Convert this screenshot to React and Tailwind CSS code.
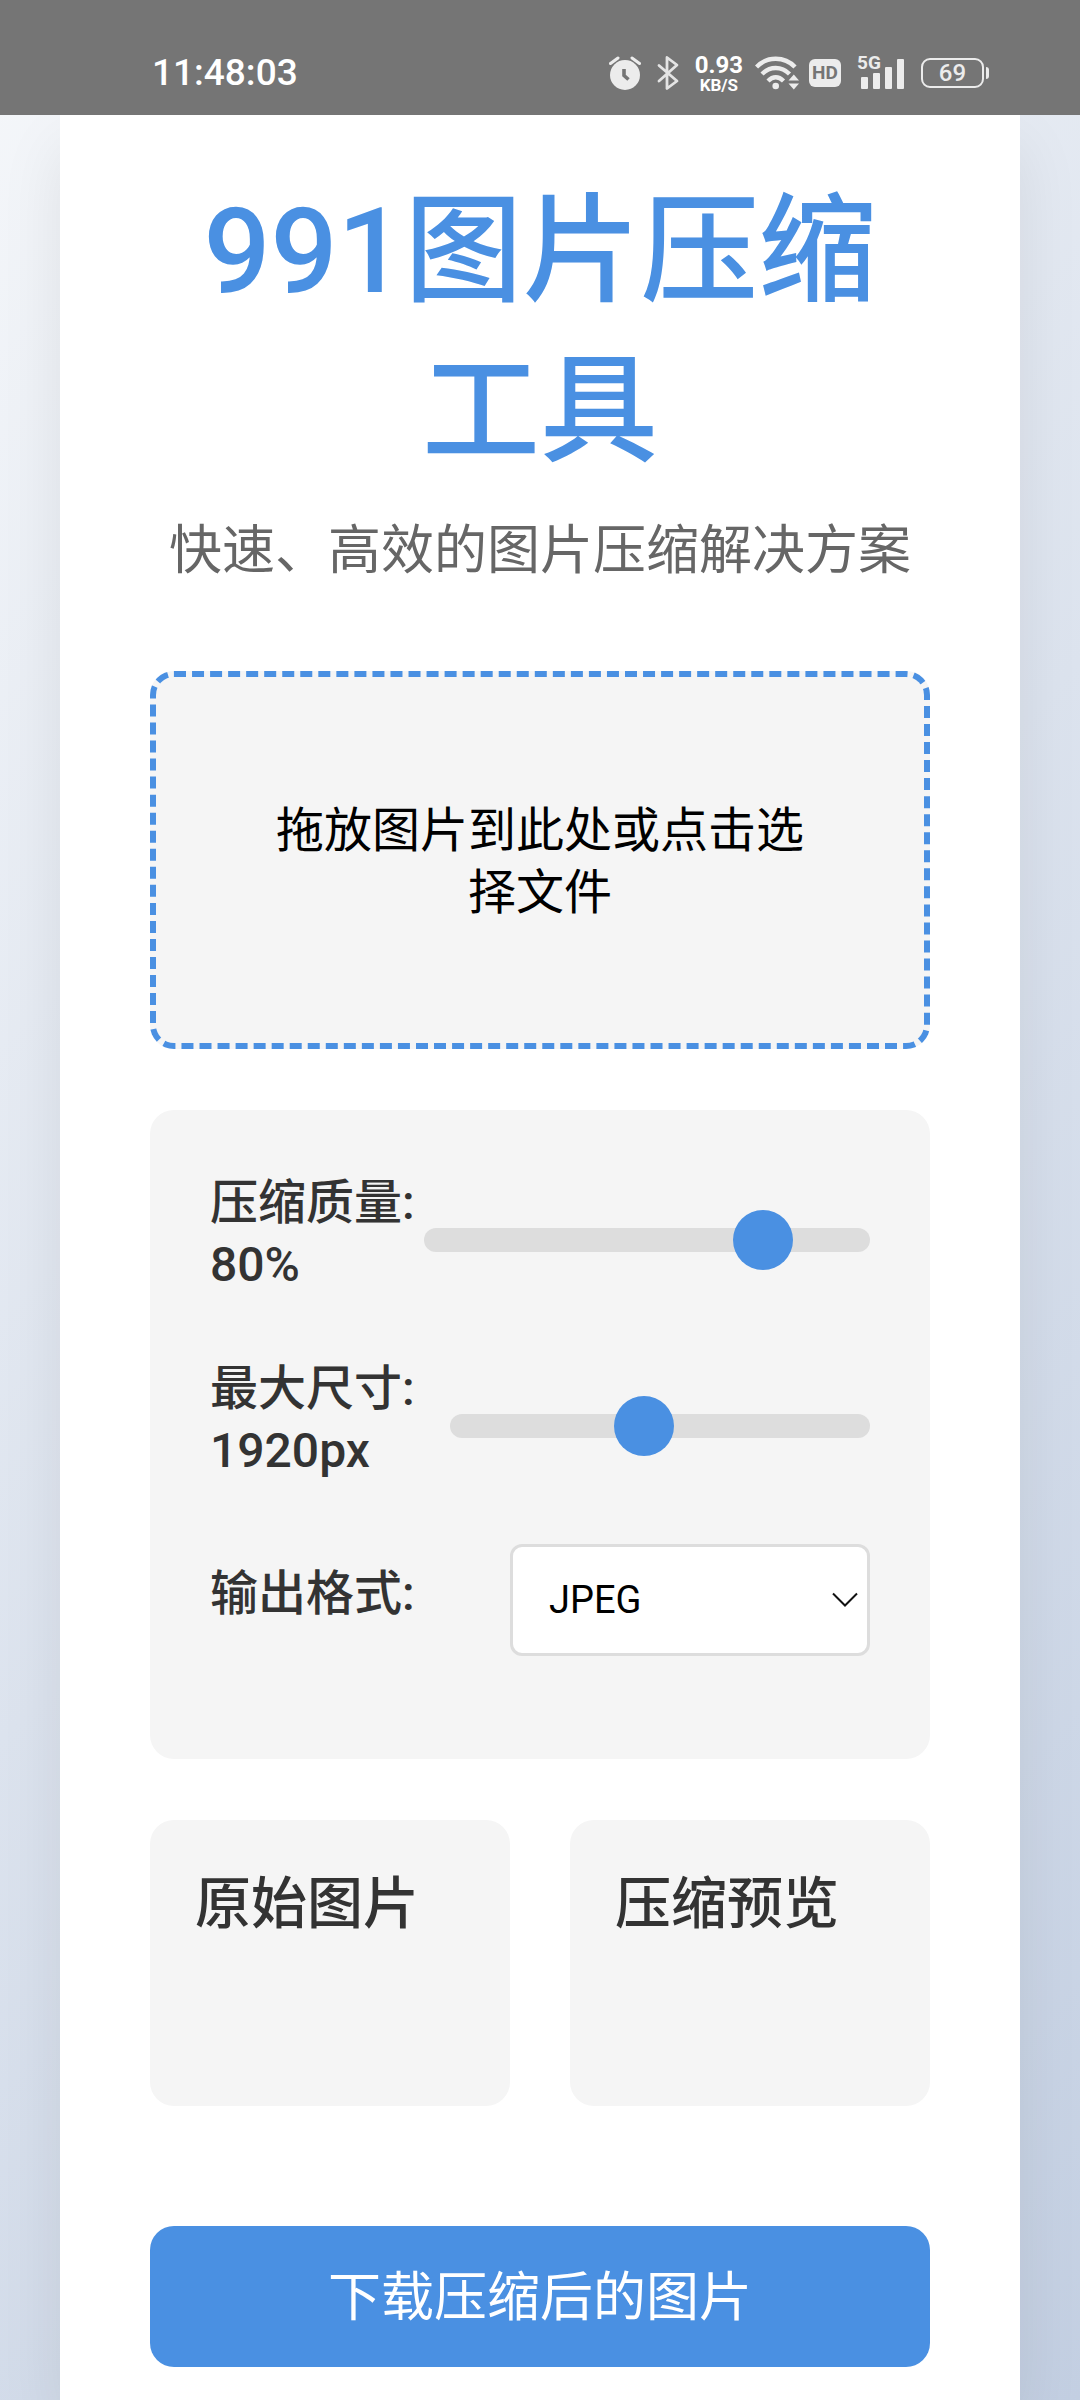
import { useState } from 'react';

const AlarmIcon = () => (
  <svg width="32" height="36" viewBox="0 0 32 36" fill="none" aria-hidden="true">
    <circle cx="16" cy="20" r="15" fill="#ececec" />
    <path d="M1.500 8.500 9 3M30.500 8.500 23 3" stroke="#ececec" strokeWidth="3" strokeLinecap="round" />
    <path d="M15 14v6.500l4.500 4" stroke="#757575" strokeWidth="3.600" />
  </svg>
);

const BluetoothIcon = () => (
  <svg width="22" height="36" viewBox="0 0 22 36" fill="none" aria-hidden="true">
    <path
      d="M2 10.500 20 26l-10 7.500v-31L20 10 2 26"
      stroke="#e4e4e4"
      strokeWidth="2.800"
      strokeLinejoin="round"
      strokeLinecap="round"
    />
  </svg>
);

const WifiIcon = () => (
  <svg width="46" height="36" viewBox="0 0 46 36" fill="none" aria-hidden="true">
    <g stroke="#ececec" strokeWidth="4.400">
      <path d="M1.500 12C12 1 29.500 1 40 12" />
      <path d="M7 19c8-8 19.500-8 27.500 0" />
      <path d="M13 26c5-5 10.500-5 15.500 0" />
    </g>
    <circle cx="20.700" cy="31" r="3.300" fill="#ececec" />
    <path d="M33.500 25.500h10.500l-5.200-6zM33.500 28.500h10.500l-5.200 6z" fill="#ececec" />
  </svg>
);

const SignalIcon = () => (
  <svg width="48" height="36" viewBox="0 0 48 36" fill="#ececec" aria-hidden="true">
    <rect x="4" y="22" width="7" height="12" rx="1" />
    <rect x="16" y="18" width="7" height="16" rx="1" />
    <rect x="28" y="12" width="7" height="22" rx="1" />
    <rect x="40" y="4" width="7" height="30" rx="1" />
  </svg>
);

const StatusBar = () => (
  <div className="relative z-10 flex h-[115px] shrink-0 items-center justify-between bg-[#757575] pt-[30px] pr-[91px] pl-[152px] text-[#ececec]">
    <time className="text-[37px] leading-none font-medium text-white">11:48:03</time>
    <div className="flex items-center">
      <AlarmIcon />
      <span className="ml-4">
        <BluetoothIcon />
      </span>
      <div className="ml-4 flex flex-col items-center font-bold text-white">
        <span className="text-[24px] leading-6">0.93</span>
        <span className="text-[17px] leading-4">KB/S</span>
      </div>
      <span className="ml-3">
        <WifiIcon />
      </span>
      <span className="ml-2 flex h-7 w-8 items-center justify-center rounded-md bg-[#ececec] text-[19px] leading-none font-bold text-[#757575]">
        HD
      </span>
      <div className="relative ml-4">
        <SignalIcon />
        <span className="absolute top-0 left-0 bg-[#757575] text-[19px] leading-4 font-bold">5G</span>
      </div>
      <div className="ml-4 flex items-center gap-0.5">
        <span className="flex h-[30px] w-[63px] items-center justify-center rounded-[9px] border-2 border-[#ececec] text-[24px] leading-none font-medium">
          69
        </span>
        <span className="h-3 w-[3px] rounded-r bg-[#ececec]" />
      </div>
    </div>
  </div>
);

const sliderClass =
  'h-6 min-w-0 flex-1 appearance-none rounded-full bg-[#ddd] outline-none [&::-webkit-slider-thumb]:size-[60px] [&::-webkit-slider-thumb]:appearance-none [&::-webkit-slider-thumb]:rounded-full [&::-webkit-slider-thumb]:bg-[#4a90e2]';

const labelClass = 'shrink-0 pb-3 text-[48px] leading-[62px] font-medium text-[#333]';

const Settings = () => {
  const [quality, setQuality] = useState(80);
  const [maxSize, setMaxSize] = useState(1920);
  const [format, setFormat] = useState('jpeg');

  return (
    <section className="mt-[61px] flex flex-col gap-[50px] rounded-3xl bg-[#f5f5f5] px-[60px] pt-[62px] pb-[103px]">
      <div className="flex items-center">
        <label htmlFor="quality" className={`${labelClass} w-[214px]`}>
          压缩质量: <span className="block">{quality}%</span>
        </label>
        <input
          id="quality"
          type="range"
          min="0"
          max="100"
          value={quality}
          onChange={(e) => setQuality(Number(e.target.value))}
          className={sliderClass}
        />
      </div>

      <div className="flex items-center">
        <label htmlFor="max-size" className={`${labelClass} w-[240px]`}>
          最大尺寸: <span className="block">{maxSize}px</span>
        </label>
        <input
          id="max-size"
          type="range"
          min="100"
          max="4096"
          value={maxSize}
          onChange={(e) => setMaxSize(Number(e.target.value))}
          className={sliderClass}
        />
      </div>

      <div className="flex items-center">
        <label htmlFor="format" className={`${labelClass} w-[300px]`}>
          输出格式:
        </label>
        <div className="relative min-w-0 flex-1">
          <select
            id="format"
            value={format}
            onChange={(e) => setFormat(e.target.value)}
            className="block h-28 w-full appearance-none rounded-xl border-3 border-[#ddd] bg-white px-9 text-[38px] text-black"
          >
            <option value="jpeg">JPEG</option>
            <option value="png">PNG</option>
            <option value="webp">WebP</option>
          </select>
          <svg
            className="pointer-events-none absolute top-12 right-3"
            width="26"
            height="16"
            viewBox="0 0 26 16"
            fill="none"
            aria-hidden="true"
          >
            <path d="m1 1.500 12 12 12-12" stroke="#111" strokeWidth="2" />
          </svg>
        </div>
      </div>
    </section>
  );
};

const PreviewCard = ({ title }) => (
  <div className="h-[286px] rounded-3xl bg-[#f5f5f5] px-[45px] pt-[46px]">
    <h3 className="text-[56px] leading-[76px] font-medium text-[#333]">{title}</h3>
  </div>
);

const App = () => {
  return (
    <div className="flex min-h-screen flex-col overflow-hidden bg-[linear-gradient(135deg,#f5f7fa_0%,#c3cfe2_100%)] font-['Roboto','Noto_Sans_CJK_SC',sans-serif]">
      <StatusBar />
      <main className="mx-[60px] flex-1 bg-white px-[90px] pt-[57px] pb-8 shadow-[0_30px_60px_rgba(0,0,0,0.08)]">
        <header className="text-center">
          <h1 className="text-[118px] leading-[160px] font-medium text-[#4a90e2]">991图片压缩工具</h1>
          <p className="mt-6 text-[53px] leading-[70px] whitespace-nowrap text-[#666]">
            快速、高效的图片压缩解决方案
          </p>
        </header>

        <label
          htmlFor="file"
          className="mt-[85px] flex h-[378px] cursor-pointer items-center justify-center rounded-3xl border-6 border-dashed border-[#4a90e2] bg-[#f5f5f5] px-[114px] pt-1 text-center text-[48px] leading-[62px] text-black"
        >
          拖放图片到此处或点击选择文件
          <input id="file" type="file" accept="image/*" className="sr-only" />
        </label>

        <Settings />

        <section className="mt-[61px] grid grid-cols-2 gap-[60px]">
          <PreviewCard title="原始图片" />
          <PreviewCard title="压缩预览" />
        </section>

        <button
          type="button"
          className="mt-[120px] h-[141px] w-full rounded-3xl bg-[#4a90e2] pt-1 text-[53px] text-white"
        >
          下载压缩后的图片
        </button>
      </main>
    </div>
  );
};

export default App;
